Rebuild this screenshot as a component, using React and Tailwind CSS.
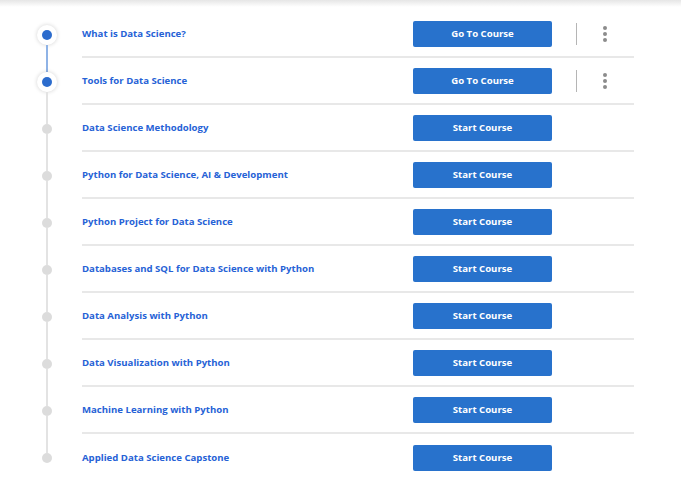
import React from "react";

const courses = [
  { title: "What is Data Science?", status: "active" },
  { title: "Tools for Data Science", status: "active" },
  { title: "Data Science Methodology" },
  { title: "Python for Data Science, AI & Development" },
  { title: "Python Project for Data Science" },
  { title: "Databases and SQL for Data Science with Python" },
  { title: "Data Analysis with Python" },
  { title: "Data Visualization with Python" },
  { title: "Machine Learning with Python" },
  { title: "Applied Data Science Capstone" },
];

function Kebab() {
  return (
    <div className="flex flex-col items-center gap-[2px] w-[6px]">
      <span className="block w-[4px] h-[4px] rounded-full bg-[#8c8c8c]" />
      <span className="block w-[4px] h-[4px] rounded-full bg-[#8c8c8c]" />
      <span className="block w-[4px] h-[4px] rounded-full bg-[#8c8c8c]" />
    </div>
  );
}

export default function App() {
  return (
    <div
      className="w-[681px] h-[490px] bg-white relative overflow-hidden"
      style={{ fontFamily: '"Open Sans", "Liberation Sans", sans-serif' }}
    >
      <div className="h-[7px] bg-gradient-to-b from-[#e6e6e6] to-white" />
      <div className="pt-[4px] flex flex-col">
        {courses.map((c, i) => {
          const active = c.status === "active";
          const first = i === 0;
          const last = i === courses.length - 1;
          const topBlue = i === 1;
          const bottomBlue = i === 0;
          return (
            <div key={c.title} className="flex h-[47px]">
              <div className="w-[82px] pl-[11px] flex flex-col items-center">
                <div
                  className={
                    "flex-1 w-[2px] " +
                    (first ? "bg-transparent" : topBlue ? "bg-[#8fb3e6]" : "bg-[#e3e3e3]")
                  }
                />
                {active ? (
                  <div className="w-[20px] h-[20px] rounded-full bg-white shadow-[0_0_4px_rgba(0,0,0,0.18)] flex items-center justify-center">
                    <div className="w-[10px] h-[10px] rounded-full bg-[#2c6ccd]" />
                  </div>
                ) : (
                  <div className="w-[10px] h-[10px] rounded-full bg-[#dcdcdc]" />
                )}
                <div
                  className={
                    "flex-1 w-[2px] " +
                    (last ? "bg-transparent" : bottomBlue ? "bg-[#8fb3e6]" : "bg-[#e3e3e3]")
                  }
                />
              </div>
              <div
                className={
                  "w-[552px] flex items-center " +
                  (last ? "" : "border-b-2 border-[#e8e8e8]")
                }
              >
                <div className="w-[331px] text-[9.6px] font-bold text-[#2662d6] leading-none">
                  {c.title}
                </div>
                <button className="w-[139px] h-[26px] rounded-[2px] bg-[#2872cc] text-white text-[9.6px] font-bold leading-none">
                  {active ? "Go To Course" : "Start Course"}
                </button>
                {active && (
                  <div className="flex items-center">
                    <div className="ml-[24px] w-[1px] h-[22px] bg-[#b5b5b5]" />
                    <div className="ml-[25px]">
                      <Kebab />
                    </div>
                  </div>
                )}
              </div>
            </div>
          );
        })}
      </div>
    </div>
  );
}
